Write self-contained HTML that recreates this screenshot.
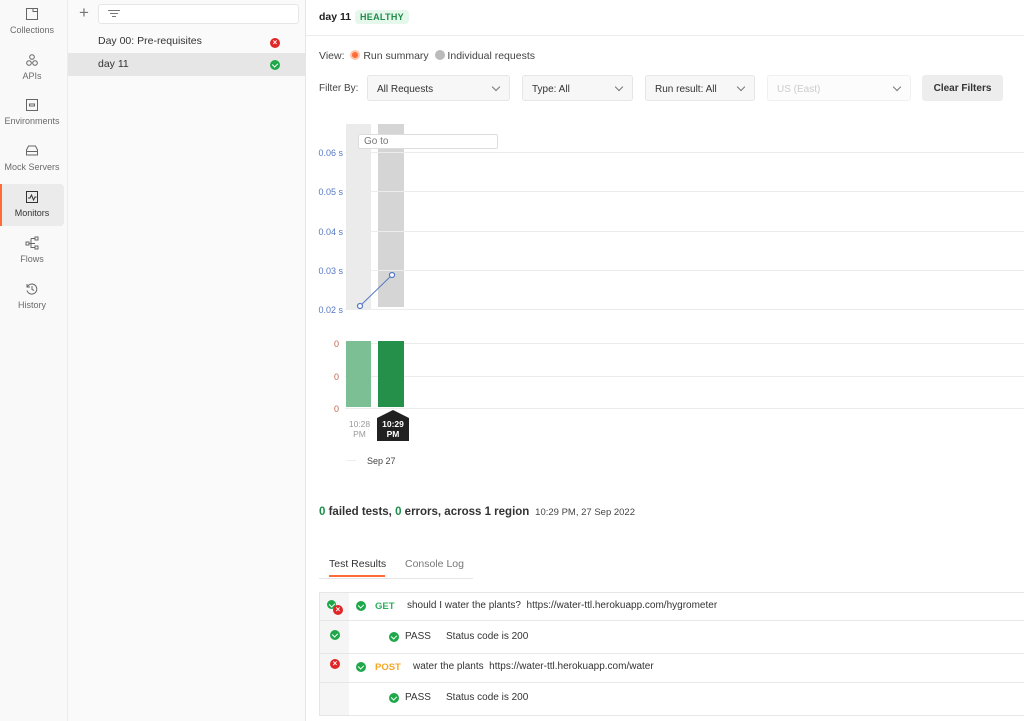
<!DOCTYPE html>
<html><head><meta charset="utf-8"><style>
*{box-sizing:border-box;margin:0;padding:0}
body{width:1024px;height:721px;overflow:hidden;font-family:"Liberation Sans",sans-serif;font-size:11px;color:#212121;background:#fff;position:relative}
.abs{position:absolute}
.nav{left:0;top:0;width:68px;height:721px;background:#f9f9f9;border-right:1px solid #ececec}
.ni{position:absolute;left:0;width:64px;height:42px;text-align:center;color:#6b6b6b;font-size:9px}
.ni svg{display:block;margin:0 auto 4px}
.list{left:68px;top:0;width:238px;height:721px;background:#fafafa;border-right:1px solid #e6e6e6}
.dd{position:absolute;top:75px;height:26px;border:1px solid #e6e6e6;background:#f7f7f7;border-radius:3px;padding:8px 9px;font-size:10px;color:#333}
.dd:after{content:"";position:absolute;right:10px;top:8px;width:5px;height:5px;border-right:1px solid #777;border-bottom:1px solid #777;transform:rotate(45deg)}
.gl{position:absolute;left:345px;right:0;height:1px;background:#ececec}
.yl{position:absolute;width:40px;left:303px;text-align:right;font-size:9px;color:#5478c4}
.rl{position:absolute;width:36px;left:303px;text-align:right;font-size:9px;color:#c0654a}
.ok{display:inline-block;width:10px;height:10px;border-radius:50%;background:#1ea84a;position:relative;vertical-align:middle}
.ok:after{content:"";position:absolute;left:3px;top:2px;width:3px;height:4px;border-right:1.3px solid #fff;border-bottom:1.3px solid #fff;transform:rotate(45deg)}
.er{display:inline-block;width:10px;height:10px;border-radius:50%;background:#e02626;color:#fff;font-size:8px;line-height:10px;text-align:center;vertical-align:middle;font-weight:bold}
.row{position:absolute;left:349px;right:0;border-bottom:1px solid #e8e8e8;font-size:10px;color:#333}
</style></head><body>
<div class="abs nav">
 <div class="ni" style="top:7px"><svg width="14" height="14" viewBox="0 0 14 14"><path d="M1.5 1.5h11v11h-11z M8 1.5v3h4.5" fill="none" stroke="#666"/></svg>Collections</div>
 <div class="ni" style="top:53px"><svg width="14" height="14" viewBox="0 0 14 14" fill="none" stroke="#666"><circle cx="7" cy="4" r="2.3"/><circle cx="4" cy="10" r="2.3"/><circle cx="10" cy="10" r="2.3"/></svg>APIs</div>
 <div class="ni" style="top:98px"><svg width="14" height="14" viewBox="0 0 14 14" fill="none" stroke="#666"><path d="M1.5 1.5h11v11h-11z M4.5 6h5v2h-5z"/></svg>Environments</div>
 <div class="ni" style="top:144px"><svg width="14" height="14" viewBox="0 0 14 14" fill="none" stroke="#666"><path d="M1.5 6l2-4h7l2 4v5h-11z M1.5 7.5h11"/></svg>Mock Servers</div>
 <div class="abs" style="left:0;top:184px;width:64px;height:42px;background:#ebebeb;border-radius:0 4px 4px 0;border-left:2px solid #ff6c37"></div>
 <div class="ni" style="top:190px;color:#333"><svg width="14" height="14" viewBox="0 0 14 14" fill="none" stroke="#333"><path d="M1.5 1.5h11v11h-11z M3 8h2l1.5-3 2 5 1.5-3h1.5"/></svg>Monitors</div>
 <div class="ni" style="top:236px"><svg width="14" height="14" viewBox="0 0 14 14" fill="none" stroke="#666"><path d="M1 6h3v3h-3z M10 1h3v3h-3z M10 10h3v3h-3z M4 7.5h2 M6 2.5v9.5 M6 2.5h4 M6 11.5h4 M6 7.5h4"/></svg>Flows</div>
 <div class="ni" style="top:282px"><svg width="14" height="14" viewBox="0 0 14 14" fill="none" stroke="#666"><path d="M2.5 4.5a5 5 0 1 1 -0.5 4 M2 2v3h3 M7 4v3.5l2 1"/></svg>History</div>
</div>
<div class="abs list">
 <div class="abs" style="left:11px;top:6px;font-size:17px;color:#777;line-height:14px">+</div>
 <div class="abs" style="left:30px;top:4px;width:201px;height:20px;border:1px solid #e6e6e6;background:#fff;border-radius:3px"><svg style="position:absolute;left:9px;top:4px" width="12" height="10" viewBox="0 0 12 10" stroke="#777"><path d="M0 1.5h12 M2 4.5h8 M4 7.5h4"/></svg></div>
 <div class="abs" style="left:30px;top:35px;font-size:10.5px;color:#333">Day 00: Pre-requisites</div>
 <div class="abs" style="left:202px;top:37px"><span class="er">×</span></div>
 <div class="abs" style="left:0;top:53px;width:237px;height:23px;background:#e6e6e6"></div>
 <div class="abs" style="left:30px;top:58px;font-size:10.5px;color:#333">day 11</div>
 <div class="abs" style="left:202px;top:59px"><span class="ok"></span></div>
</div>
<div class="abs" style="left:306px;top:35px;right:0;height:1px;background:#ececec"></div>
<div class="abs" style="left:319px;top:11px;font-size:10.5px;font-weight:bold">day 11</div>
<div class="abs" style="left:355px;top:10px;padding:2px 5px;background:#e6f7ec;color:#1e8c4a;border-radius:4px;font-size:9px;font-weight:bold;letter-spacing:.3px">HEALTHY</div>
<div class="abs" style="left:319px;top:50px;font-size:10.5px;color:#444">View: <span style="display:inline-block;width:10px;height:10px;border-radius:50%;background:#ff6c37;border:2px solid #ffc7b0;vertical-align:-1px;margin-left:3px"></span> Run summary &nbsp;<span style="display:inline-block;width:10px;height:10px;border-radius:50%;background:#bbb;vertical-align:-1px"></span> Individual requests</div>
<div class="abs" style="left:319px;top:83px;font-size:10px;color:#444">Filter By:</div>
<div class="dd" style="left:367px;width:143px">All Requests</div>
<div class="dd" style="left:522px;width:111px">Type: All</div>
<div class="dd" style="left:645px;width:110px">Run result: All</div>
<div class="dd" style="left:767px;width:144px;background:#fcfcfc;color:#ccc;border-color:#f0f0f0">US (East)</div>
<div class="abs" style="left:922px;top:75px;width:81px;height:26px;background:#ededed;border-radius:3px;font-size:10px;font-weight:bold;text-align:center;padding-top:8px;color:#333">Clear Filters</div>

<div class="abs" style="left:346px;top:124px;width:25px;height:186px;background:#ebebeb"></div>
<div class="abs" style="left:378px;top:124px;width:26px;height:183px;background:#d5d5d5"></div>
<div class="gl" style="top:152px"></div><div class="gl" style="top:191px"></div><div class="gl" style="top:231px"></div><div class="gl" style="top:270px"></div><div class="gl" style="top:309px"></div>
<div class="gl" style="top:343px"></div><div class="gl" style="top:376px"></div><div class="gl" style="top:408px"></div>
<div class="abs" style="left:358px;top:134px;width:140px;height:15px;border:1px solid #ddd;background:#fff;border-radius:2px;font-size:10px;color:#777;padding:1px 5px">Go to</div>
<div class="yl" style="top:148px">0.06 s</div><div class="yl" style="top:187px">0.05 s</div><div class="yl" style="top:227px">0.04 s</div><div class="yl" style="top:266px">0.03 s</div><div class="yl" style="top:305px">0.02 s</div>
<div class="rl" style="top:339px">0</div><div class="rl" style="top:372px">0</div><div class="rl" style="top:404px">0</div>
<svg class="abs" style="left:0;top:0" width="420" height="320"><path d="M360 306L392 275" stroke="#5478c4"/><circle cx="360" cy="306" r="2.5" fill="#fff" stroke="#5478c4" stroke-width="1.2"/><circle cx="392" cy="275" r="2.5" fill="#fff" stroke="#5478c4" stroke-width="1.2"/></svg>
<div class="abs" style="left:346px;top:341px;width:25px;height:66px;background:#7dbf94"></div>
<div class="abs" style="left:378px;top:341px;width:26px;height:66px;background:#24904a"></div>
<div class="abs" style="left:346px;top:419px;width:27px;font-size:8.5px;color:#999;text-align:center;line-height:10px">10:28<br>PM</div>
<svg class="abs" style="left:377px;top:410px" width="32" height="31"><path d="M0 8L16 0 32 8V31H0z" fill="#212121"/></svg>
<div class="abs" style="left:377px;top:419px;width:32px;font-size:8.5px;color:#fff;font-weight:bold;text-align:center;line-height:10px">10:29<br>PM</div>
<div class="abs" style="left:346px;top:460px;width:10px;height:1px;background:#eee"></div>
<div class="abs" style="left:367px;top:456px;font-size:9px;color:#444">Sep 27</div>

<div class="abs" style="left:319px;top:506px;font-size:11.5px;font-weight:bold;color:#333"><span style="color:#1e8c4a">0</span> failed tests, <span style="color:#1e8c4a">0</span> errors, across 1 region <span style="font-weight:normal;font-size:9.5px;color:#444">&nbsp;10:29 PM, 27 Sep 2022</span></div>
<div class="abs" style="left:319px;top:578px;width:154px;height:1px;background:#e6e6e6"></div>
<div class="abs" style="left:329px;top:558px;font-size:10.5px;color:#333">Test Results</div>
<div class="abs" style="left:329px;top:575px;width:56px;height:2px;background:#ff6c37"></div>
<div class="abs" style="left:405px;top:558px;font-size:10.5px;color:#777">Console Log</div>

<div class="abs" style="left:319px;top:592px;width:705px;height:124px;border:1px solid #e6e6e6;border-right:none"></div>
<div class="abs" style="left:320px;top:593px;width:29px;height:122px;background:#f5f5f5"></div>
<div class="abs" style="left:320px;top:620px;width:29px;height:1px;background:#e6e6e6"></div>
<div class="abs" style="left:320px;top:653px;width:29px;height:1px;background:#e6e6e6"></div>
<div class="abs" style="left:320px;top:682px;width:29px;height:1px;background:#e6e6e6"></div>
<div class="abs" style="left:327px;top:598px"><span class="ok" style="width:9px;height:9px"></span></div>
<div class="abs" style="left:333px;top:604px"><span class="er">×</span></div>
<div class="abs" style="left:330px;top:629px"><span class="ok"></span></div>
<div class="abs" style="left:330px;top:658px"><span class="er">×</span></div>
<div class="row" style="top:593px;height:28px;background:#fff"><span class="ok" style="position:absolute;left:7px;top:8px"></span><span style="position:absolute;left:26px;top:8px;color:#2cb15c;font-weight:bold;font-size:9.5px">GET</span><span style="position:absolute;left:58px;top:7px">should I water the plants? &nbsp;https://water-ttl.herokuapp.com/hygrometer</span></div>
<div class="row" style="top:621px;height:33px"><span class="ok" style="position:absolute;left:40px;top:11px"></span><span style="position:absolute;left:56px;top:10px">PASS</span><span style="position:absolute;left:97px;top:10px">Status code is 200</span></div>
<div class="row" style="top:654px;height:29px"><span class="ok" style="position:absolute;left:7px;top:8px"></span><span style="position:absolute;left:26px;top:8px;color:#f5a623;font-weight:bold;font-size:9.5px">POST</span><span style="position:absolute;left:64px;top:7px">water the plants &nbsp;https://water-ttl.herokuapp.com/water</span></div>
<div class="row" style="top:683px;height:33px"><span class="ok" style="position:absolute;left:40px;top:10px"></span><span style="position:absolute;left:56px;top:9px">PASS</span><span style="position:absolute;left:97px;top:9px">Status code is 200</span></div>
</body></html>
